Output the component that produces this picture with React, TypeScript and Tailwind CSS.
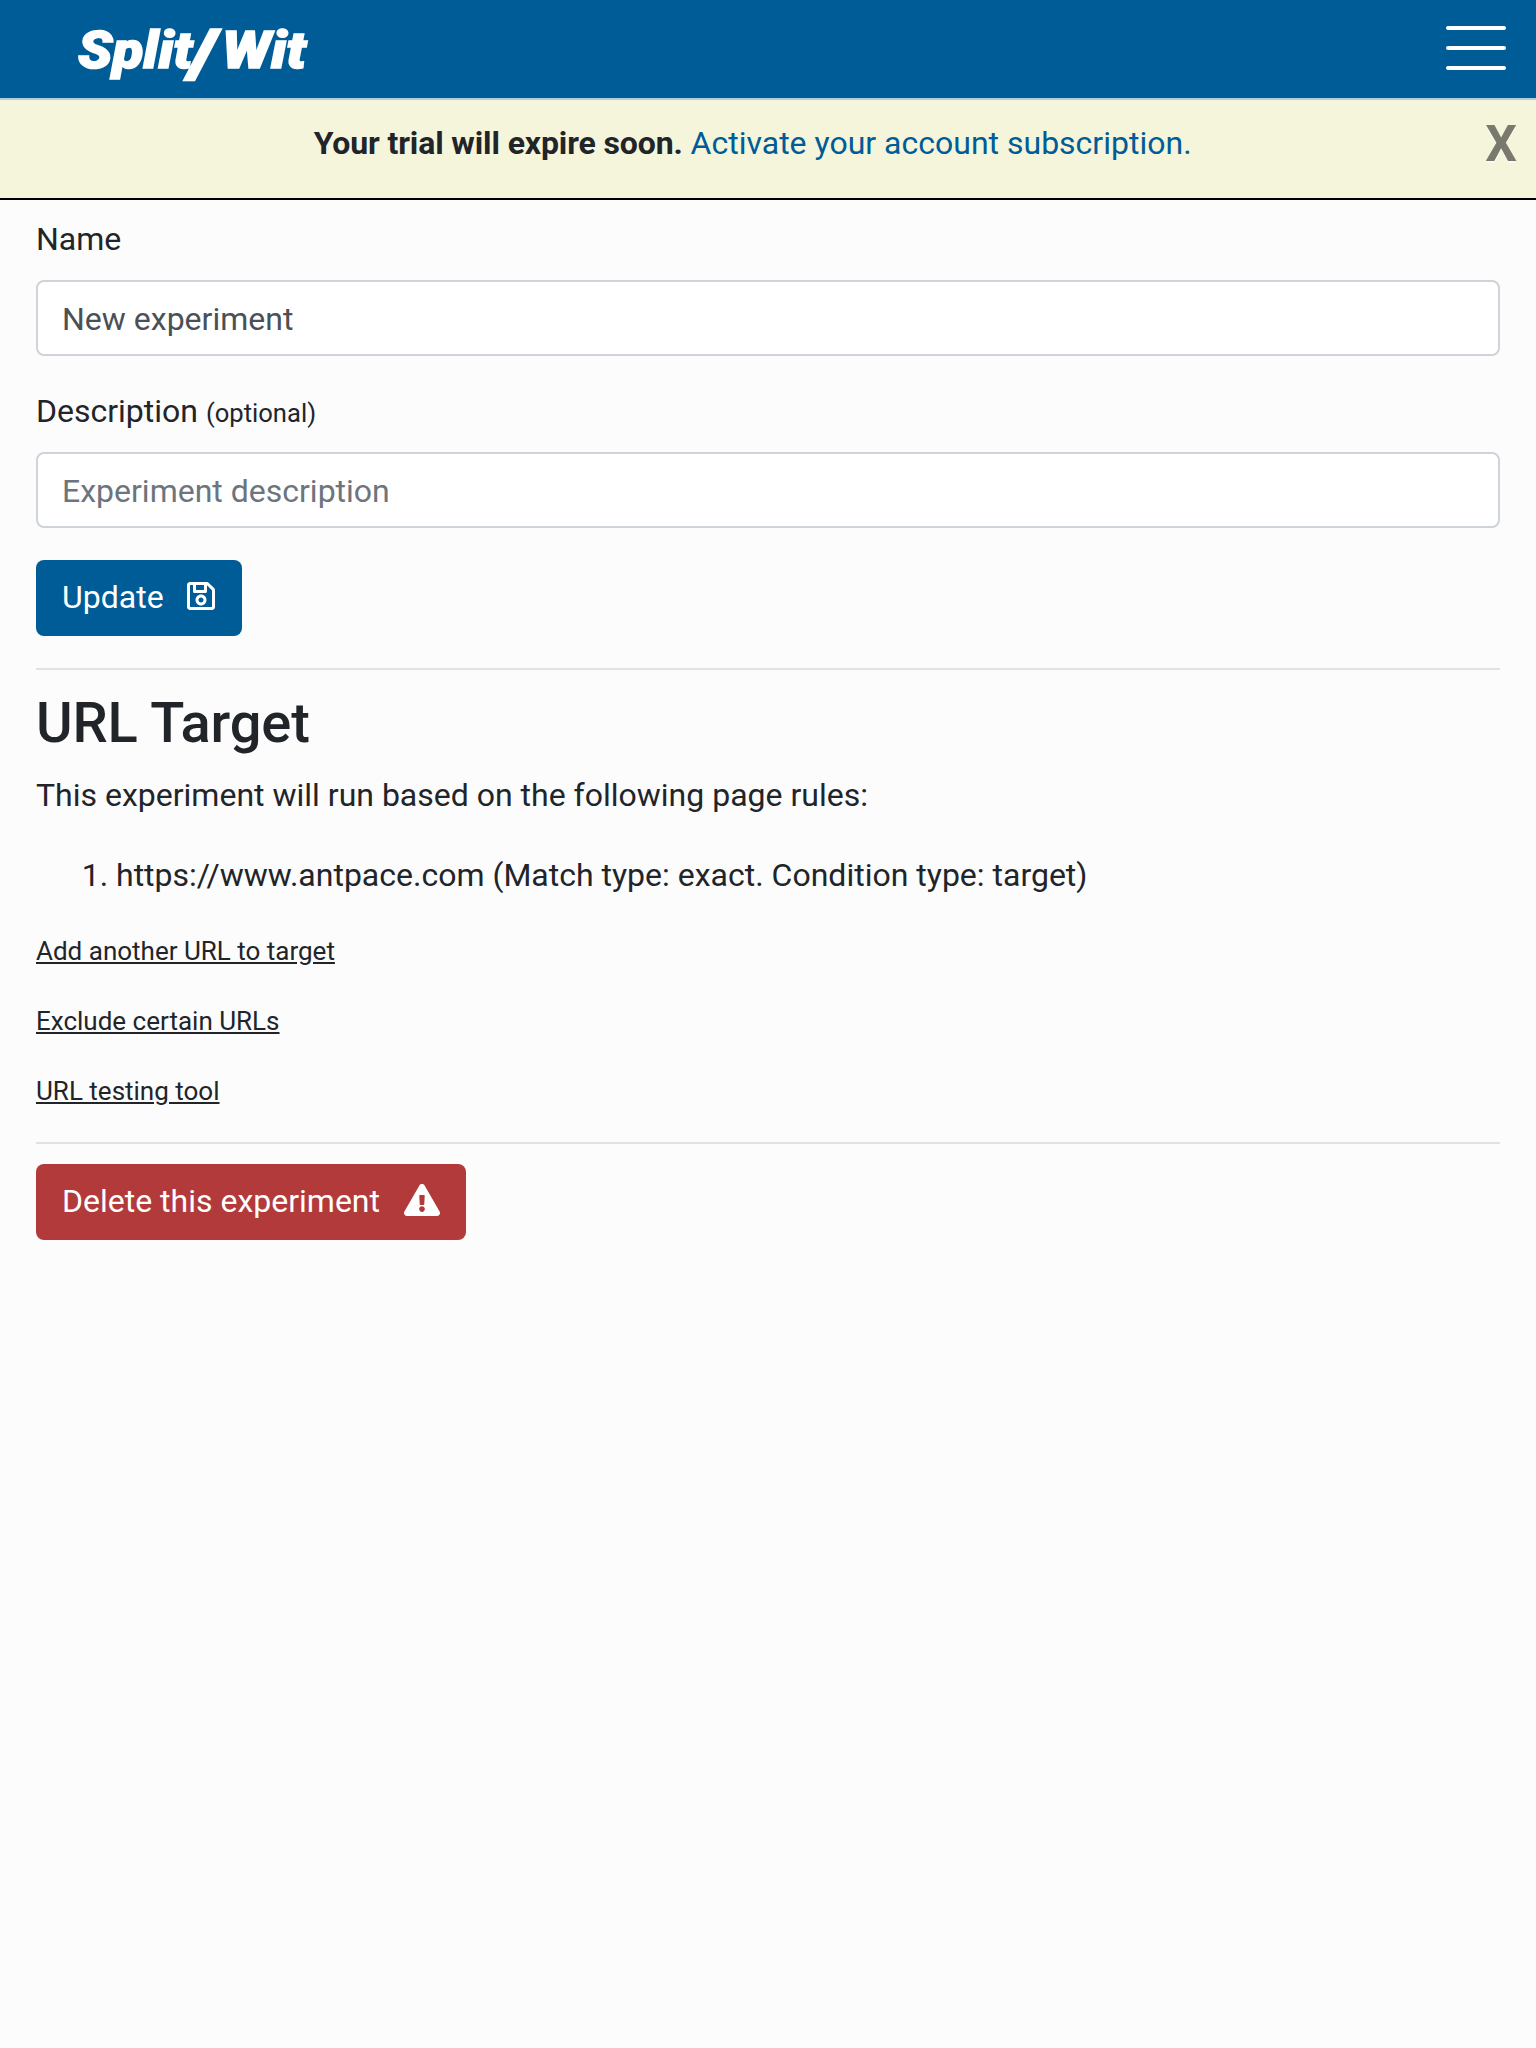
import { FaExclamationTriangle, FaRegSave } from "react-icons/fa";

function Header() {
  return (
    <header className="flex h-[100px] items-start justify-between border-b-2 border-[#b2cde0] bg-[#005c97] pl-[78px] pr-[30px]">
      <a
        href="#"
        className="mt-4 flex text-[51px] leading-[70px] font-black text-white italic [-webkit-text-stroke:1.5px_white]"
      >
        <span className="w-[113px] origin-left scale-x-[1.11]">Split</span>
        <span className="mr-px w-[30px] origin-top translate-x-[-1px] translate-y-[-4px] -skew-x-3 scale-x-[1.2] scale-y-[1.22] text-center [-webkit-text-stroke:4px_white]">
          /
        </span>
        <span className="origin-left scale-x-[1.14]">Wit</span>
      </a>
      <button aria-label="Menu" className="mt-[26px] flex w-[60px] flex-col gap-4">
        <span className="h-1 rounded-sm bg-white" />
        <span className="h-1 rounded-sm bg-white" />
        <span className="h-1 rounded-sm bg-white" />
      </button>
    </header>
  );
}

function TrialBanner() {
  return (
    <div className="flex h-[100px] items-start border-b-2 border-black bg-[#f5f5dc] pt-[19px]">
      <p className="flex-1 pl-[20px] text-center">
        <b className="font-bold tracking-[-0.12px]">Your trial will expire soon.</b>{" "}
        <a href="#" className="text-[#005c97]">
          Activate your account subscription.
        </a>
      </p>
      <button
        aria-label="Close"
        className="mt-px mr-[19px] text-[50px] leading-[48px] font-bold text-black opacity-50 [text-shadow:0_2px_0_#fff]"
      >
        X
      </button>
    </div>
  );
}

const inputClass =
  "mt-[17px] mb-[31px] block h-[76px] w-full rounded-lg border-2 border-[#ced4da] bg-white px-6 pt-0.5 text-[#495057] placeholder:text-[#6c757d] placeholder:opacity-100 outline-none";

export default function App() {
  return (
    <div className="min-h-[2048px] bg-[#fcfcfc] font-['Roboto',sans-serif] text-[32px] leading-[48px] text-[#212529]">
      <Header />
      <TrialBanner />
      <main className="px-9 pt-[15px]">
        <label className="block">Name</label>
        <input className={inputClass} defaultValue="New experiment" />
        <label className="block">
          Description <small className="text-[25.6px] leading-none">(optional)</small>
        </label>
        <input className={inputClass} placeholder="Experiment description" />
        <button className="mt-8 flex h-[76px] items-center rounded-lg bg-[#005c97] px-[26px] pb-0.5 text-white">
          Update
          <FaRegSave className="mr-[0.5px] mb-0.5 ml-[23.5px] h-8 w-7" />
        </button>

        <hr className="mt-8 mb-5 border-t-2 border-[#e2e2e2]" />

        <h3 className="mb-[15px] text-[56px] leading-[66px] font-medium tracking-[-0.14px]">URL Target</h3>
        <p className="mb-8">This experiment will run based on the following page rules:</p>
        <ol className="mb-[33px] list-decimal pl-20">
          <li>https://www.antpace.com (Match type: exact. Condition type: target)</li>
        </ol>
        <div className="flex flex-col items-start gap-8 text-[26px] leading-[38px]">
          <a href="#" className="underline">Add another URL to target</a>
          <a href="#" className="underline">Exclude certain URLs</a>
          <a href="#" className="underline">URL testing tool</a>
        </div>

        <hr className="mt-8 mb-5 border-t-2 border-[#e2e2e2]" />

        <button className="flex h-[76px] items-center rounded-lg bg-[#b23a3b] px-[26px] pb-0.5 text-white">
          Delete this experiment
          <FaExclamationTriangle className="mr-[0.5px] mb-0.5 ml-[23.5px] h-8 w-9" />
        </button>
      </main>
    </div>
  );
}
